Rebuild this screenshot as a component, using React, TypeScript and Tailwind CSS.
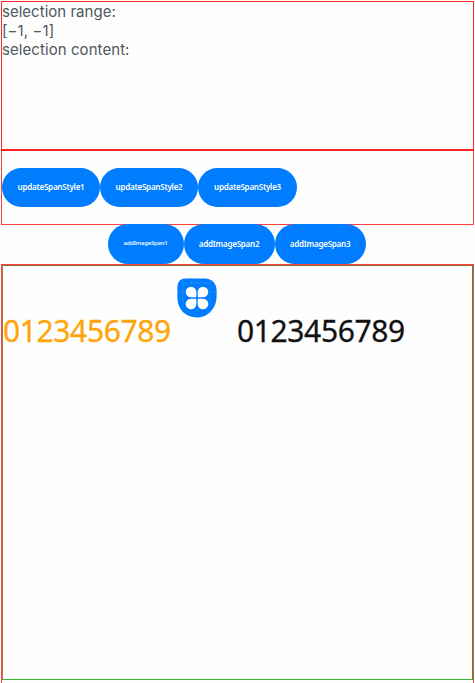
import type { ReactNode } from "react";

function Pill({ className, children }: { className: string; children: ReactNode }) {
  return (
    <button
      className={`flex h-[39.5px] shrink-0 items-center justify-center rounded-full bg-[#007dff] whitespace-nowrap text-white ${className}`}
    >
      {children}
    </button>
  );
}

function CloverIcon() {
  return (
    <svg className="-mt-[1.5px] ml-[6px] h-10 w-10 shrink-0" viewBox="0 0 40 40">
      <path
        d="M9 .4H28C35 .4 39.6 5.5 39.6 12.5V18C39.6 30 31 39.5 20 39.5C8.500 39.500 .4 31 .4 20V9C.4 3.500 3.500 .4 9 .4Z"
        fill="#007dff"
      />
      <path d="M6 0V24M14 0V5M0 14H40M4 5H34M33 2V30" stroke="#2c91fb" strokeWidth=".5" fill="none" />
      <g fill="#fff">
        <path d="M14 8.800a5.300 5.300 0 0 1 5.300 5.300v4.200q0 1-1 1H14a5.250 5.250 0 0 1 0-10.500Z" />
        <path d="M26 8.800a5.250 5.250 0 0 1 0 10.500h-4.300q-1 0-1-1v-4.200A5.300 5.300 0 0 1 26 8.800Z" />
        <path d="M14 20.700h4.300q1 0 1 1v4.200A5.300 5.300 0 1 1 14 20.700Z" />
        <path d="M21.700 20.700H26a5.300 5.300 0 1 1-5.300 5.200v-4.200q0-1 1-1Z" />
      </g>
    </svg>
  );
}

export default function App() {
  return (
    <div className="flex h-[683px] w-[475px] flex-col overflow-hidden bg-[#fefefe] pt-px pl-px font-['Noto_Sans',sans-serif]">
      <div className="flex h-[149px] w-[473px] shrink-0 flex-col border border-[#ff2828] font-['Inter',sans-serif] text-[15px] leading-[19px] text-[#50565d]">
        <p className="tracking-[0.02px]">selection range:</p>
        <p className="tracking-[0.1px]">[−1, −1]</p>
        <p className="tracking-[0.07px]">selection content:</p>
      </div>
      <div className="flex h-[75px] w-[473px] shrink-0 items-center border border-[#ff4040] border-t-[#fa1c1c] text-[8px] font-semibold tracking-[-0.22px]">
        <Pill className="w-[98px] pb-px">updateSpanStyle1</Pill>
        <Pill className="w-[98px] pb-px">updateSpanStyle2</Pill>
        <Pill className="w-[99px] pb-px">updateSpanStyle3</Pill>
      </div>
      <div className="-mt-px flex h-[39.5px] w-[471px] shrink-0 justify-center text-[8px] font-semibold tracking-[-0.22px]">
        <Pill className="w-[76px] text-[6px] font-medium">addImageSpan1</Pill>
        <Pill className="w-[91px]">addImageSpan2</Pill>
        <Pill className="w-[91px]">addImageSpan3</Pill>
      </div>
      <div className="h-[421px] w-[473px] shrink-0 border border-[#ff4040]">
        <div className="h-[415px] border border-t-[#8b702c] border-r-[#2f9a2f] border-b-[#35b435] border-l-[#a47d48] pt-[14px]">
          <div className="flex h-[70px] text-[30px] leading-[40px] tracking-[-0.38px]">
            <span className="mt-[31px] w-[168px] text-[#ffa50a] [-webkit-text-stroke:0.3px_#ffa50a]">0123456789</span>
            <CloverIcon />
            <span className="mt-[31px] ml-[20px] text-[#111] [-webkit-text-stroke:0.3px_#111]">0123456789</span>
          </div>
        </div>
      </div>
    </div>
  );
}
